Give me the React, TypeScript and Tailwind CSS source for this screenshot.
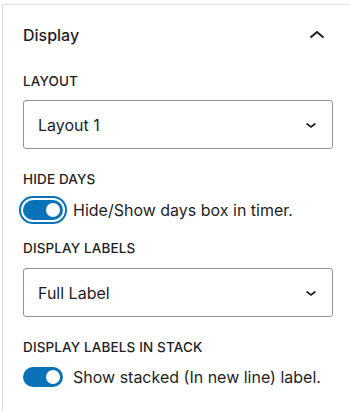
import React, { useState } from 'react';

const ChevronUp = () => (
  <svg width="24" height="24" viewBox="0 0 24 24" className="text-[#1e1e1e]">
    <path d="M5.5 14.5 12 9l6.5 5.5" fill="none" stroke="currentColor" strokeWidth="2" />
  </svg>
);

const ChevronDown = () => (
  <svg width="18" height="18" viewBox="0 0 18 18" className="text-[#1e1e1e]">
    <path d="M4.5 7.5 9 11l4.5-3.5" fill="none" stroke="currentColor" strokeWidth="1.6" />
  </svg>
);

const Label = ({ children }: { children: React.ReactNode }) => (
  <div className="text-[13.5px] leading-4 font-medium uppercase text-[#1e1e1e] tracking-[0.01em]">{children}</div>
);

const SelectBox = ({ value }: { value: string }) => (
  <div className="w-[310px] h-[49px] border border-[#949494] rounded-[3px] flex items-center justify-between pl-[14px] pr-[12px]">
    <span className="text-[16px] text-[#1e1e1e]">{value}</span>
    <ChevronDown />
  </div>
);

const Toggle = ({ on, focused, onClick }: { on: boolean; focused?: boolean; onClick: () => void }) => (
  <button
    onClick={onClick}
    className={`relative w-[40px] h-[20px] rounded-full shrink-0 ${on ? 'bg-[#0a72b8]' : 'bg-white border border-[#1e1e1e]'} ${focused ? 'outline-2 outline-offset-2 outline-[#0a72b8]' : ''}`}
  >
    <span
      className={`absolute top-[3px] w-[14px] h-[14px] rounded-full ${on ? 'bg-white left-[23px]' : 'bg-[#1e1e1e] left-[3px]'}`}
    />
  </button>
);

export default function App() {
  const [hideDays, setHideDays] = useState(true);
  const [stack, setStack] = useState(true);

  return (
    <div className="w-[351px] h-[411px] bg-white overflow-hidden pl-[2px]" style={{ fontFamily: 'Inter, "Noto Sans", sans-serif' }}>
      <div className="h-full border-l border-[#e0e0e0]">
        <div className="mt-[4px] border-t border-[#e0e0e0] pl-[20px]">
          <div className="flex items-center justify-between h-[20px] mt-[20px] pr-[22px]">
            <span className="text-[16px] leading-5 text-[#1e1e1e] font-medium">Display</span>
            <ChevronUp />
          </div>
          <div className="mt-[28px]">
            <Label>Layout</Label>
          </div>
          <div className="mt-[11px]">
            <SelectBox value="Layout 1" />
          </div>
          <div className="mt-[22px]">
            <Label>Hide Days</Label>
          </div>
          <div className="mt-[11px] flex items-center gap-[10px] h-[24px]">
            <Toggle on={hideDays} focused onClick={() => setHideDays(!hideDays)} />
            <span className="text-[16px] text-[#1e1e1e]">Hide/Show days box in timer.</span>
          </div>
          <div className="mt-[18px]">
            <Label>Display Labels</Label>
          </div>
          <div className="mt-[12px]">
            <SelectBox value="Full Label" />
          </div>
          <div className="mt-[22px]">
            <Label>Display Labels in Stack</Label>
          </div>
          <div className="mt-[10px] flex items-center gap-[10px] h-[24px]">
            <Toggle on={stack} onClick={() => setStack(!stack)} />
            <span className="text-[16px] text-[#1e1e1e]">Show stacked (In new line) label.</span>
          </div>
        </div>
      </div>
    </div>
  );
}
